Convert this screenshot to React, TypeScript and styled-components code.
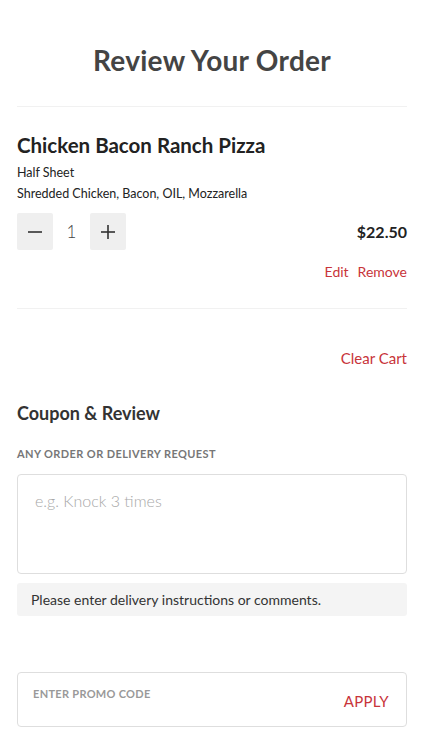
import React from "react";
import styled, { createGlobalStyle } from "styled-components";

const GlobalStyle = createGlobalStyle`
  html, body {
    margin: 0;
    padding: 0;
    background: #ffffff;
  }
  body {
    font-family: Lato, "Liberation Sans", sans-serif;
    -webkit-font-smoothing: antialiased;
  }
  * {
    box-sizing: border-box;
  }
`;

const Page = styled.div`
  width: 100%;
  min-height: 750px;
  padding: 0 15px 0 17px;
  display: flex;
  flex-direction: column;
`;

const Title = styled.h1`
  margin: 0;
  padding: 43px 0 0;
  height: 106px;
  text-align: center;
  font-size: 28px;
  font-weight: 700;
  color: #444;
  letter-spacing: 0.3px;
`;

const Divider = styled.hr`
  margin: 0;
  border: 0;
  height: 1px;
  background: #f1f1f1;
`;

const Item = styled.section`
  padding: 26px 0 0;
  height: 201px;
  display: flex;
  flex-direction: column;
`;

const ItemName = styled.h2`
  margin: 0;
  font-size: 20.5px;
  font-weight: 700;
  color: #222;
  line-height: 24px;
`;

const Detail = styled.div<{ $first?: boolean }>`
  font-size: 12.5px;
  color: #222;
  line-height: 21px;
  margin-top: ${(p) => (p.$first ? "5px" : "0")};
`;

const QtyRow = styled.div`
  display: flex;
  align-items: center;
  justify-content: space-between;
  margin-top: 9px;
`;

const Stepper = styled.div`
  display: flex;
  align-items: center;
`;

const StepButton = styled.button`
  appearance: none;
  border: 0;
  width: 36px;
  height: 37px;
  border-radius: 2px;
  background: #efefef;
  display: flex;
  align-items: center;
  justify-content: center;
  padding: 0;
  color: #333;
  cursor: pointer;
`;

const Qty = styled.span`
  width: 37px;
  text-align: center;
  font-size: 17px;
  color: #444;
  font-weight: 300;
`;

const Price = styled.span`
  font-size: 16px;
  font-weight: 700;
  color: #222;
`;

const Actions = styled.div`
  display: flex;
  justify-content: flex-end;
  gap: 9px;
  margin-top: 13px;
`;

const RedLink = styled.button<{ $size?: number }>`
  appearance: none;
  border: 0;
  background: none;
  padding: 0;
  font-family: inherit;
  font-size: ${(p) => p.$size ?? 14}px;
  color: #c8343a;
  cursor: pointer;
`;

const ClearRow = styled.div`
  display: flex;
  justify-content: flex-end;
  align-items: flex-start;
  padding-top: 40px;
  height: 93px;
`;

const SectionTitle = styled.h3`
  margin: 0;
  font-size: 18px;
  font-weight: 700;
  color: #333;
  line-height: 22px;
`;

const FieldLabel = styled.div`
  margin-top: 23px;
  font-size: 11px;
  font-weight: 700;
  letter-spacing: 0.4px;
  color: #777;
`;

const TextArea = styled.textarea`
  margin-top: 14px;
  width: 100%;
  height: 100px;
  border: 1px solid #dedede;
  border-radius: 4px;
  padding: 16px 17px;
  font-family: inherit;
  font-size: 16px;
  color: #333;
  resize: none;
  outline: none;
  &::placeholder {
    color: #a8a8a8;
    font-weight: 300;
  }
`;

const Helper = styled.div`
  margin-top: 9px;
  background: #f4f4f4;
  border-radius: 3px;
  height: 33px;
  padding: 0 14px;
  display: flex;
  align-items: center;
  font-size: 14px;
  color: #333;
`;

const PromoBox = styled.div`
  margin-top: 56px;
  height: 55px;
  border: 1px solid #dedede;
  border-radius: 4px;
  display: flex;
  align-items: flex-start;
  justify-content: space-between;
  padding: 14px 17px 0 15px;
`;

const PromoLabel = styled.span`
  font-size: 11px;
  font-weight: 700;
  letter-spacing: 0.3px;
  color: #999;
`;

const ApplyLink = styled(RedLink)`
  margin-top: 5px;
  letter-spacing: 0.3px;
`;

const Minus = () => (
  <svg width="16" height="16" viewBox="0 0 16 16">
    <line x1="1" y1="8" x2="15" y2="8" stroke="#333" strokeWidth="1.6" />
  </svg>
);

const Plus = () => (
  <svg width="16" height="16" viewBox="0 0 16 16">
    <line x1="1" y1="8" x2="15" y2="8" stroke="#333" strokeWidth="1.6" />
    <line x1="8" y1="1" x2="8" y2="15" stroke="#333" strokeWidth="1.6" />
  </svg>
);

export default function App() {
  const [qty, setQty] = React.useState(1);

  return (
    <>
      <GlobalStyle />
      <Page>
        <Title>Review Your Order</Title>
        <Divider />

        <Item>
          <ItemName>Chicken Bacon Ranch Pizza</ItemName>
          <Detail $first>Half Sheet</Detail>
          <Detail>Shredded Chicken, Bacon, OIL, Mozzarella</Detail>
          <QtyRow>
            <Stepper>
              <StepButton aria-label="Decrease" onClick={() => setQty((q) => Math.max(1, q - 1))}>
                <Minus />
              </StepButton>
              <Qty>{qty}</Qty>
              <StepButton aria-label="Increase" onClick={() => setQty((q) => q + 1)}>
                <Plus />
              </StepButton>
            </Stepper>
            <Price>${(22.5 * qty).toFixed(2)}</Price>
          </QtyRow>
          <Actions>
            <RedLink>Edit</RedLink>
            <RedLink>Remove</RedLink>
          </Actions>
        </Item>
        <Divider />

        <ClearRow>
          <RedLink $size={15}>Clear Cart</RedLink>
        </ClearRow>

        <SectionTitle>Coupon &amp; Review</SectionTitle>
        <FieldLabel>ANY ORDER OR DELIVERY REQUEST</FieldLabel>
        <TextArea placeholder="e.g. Knock 3 times" />
        <Helper>Please enter delivery instructions or comments.</Helper>

        <PromoBox>
          <PromoLabel>ENTER PROMO CODE</PromoLabel>
          <ApplyLink $size={15}>APPLY</ApplyLink>
        </PromoBox>
      </Page>
    </>
  );
}
